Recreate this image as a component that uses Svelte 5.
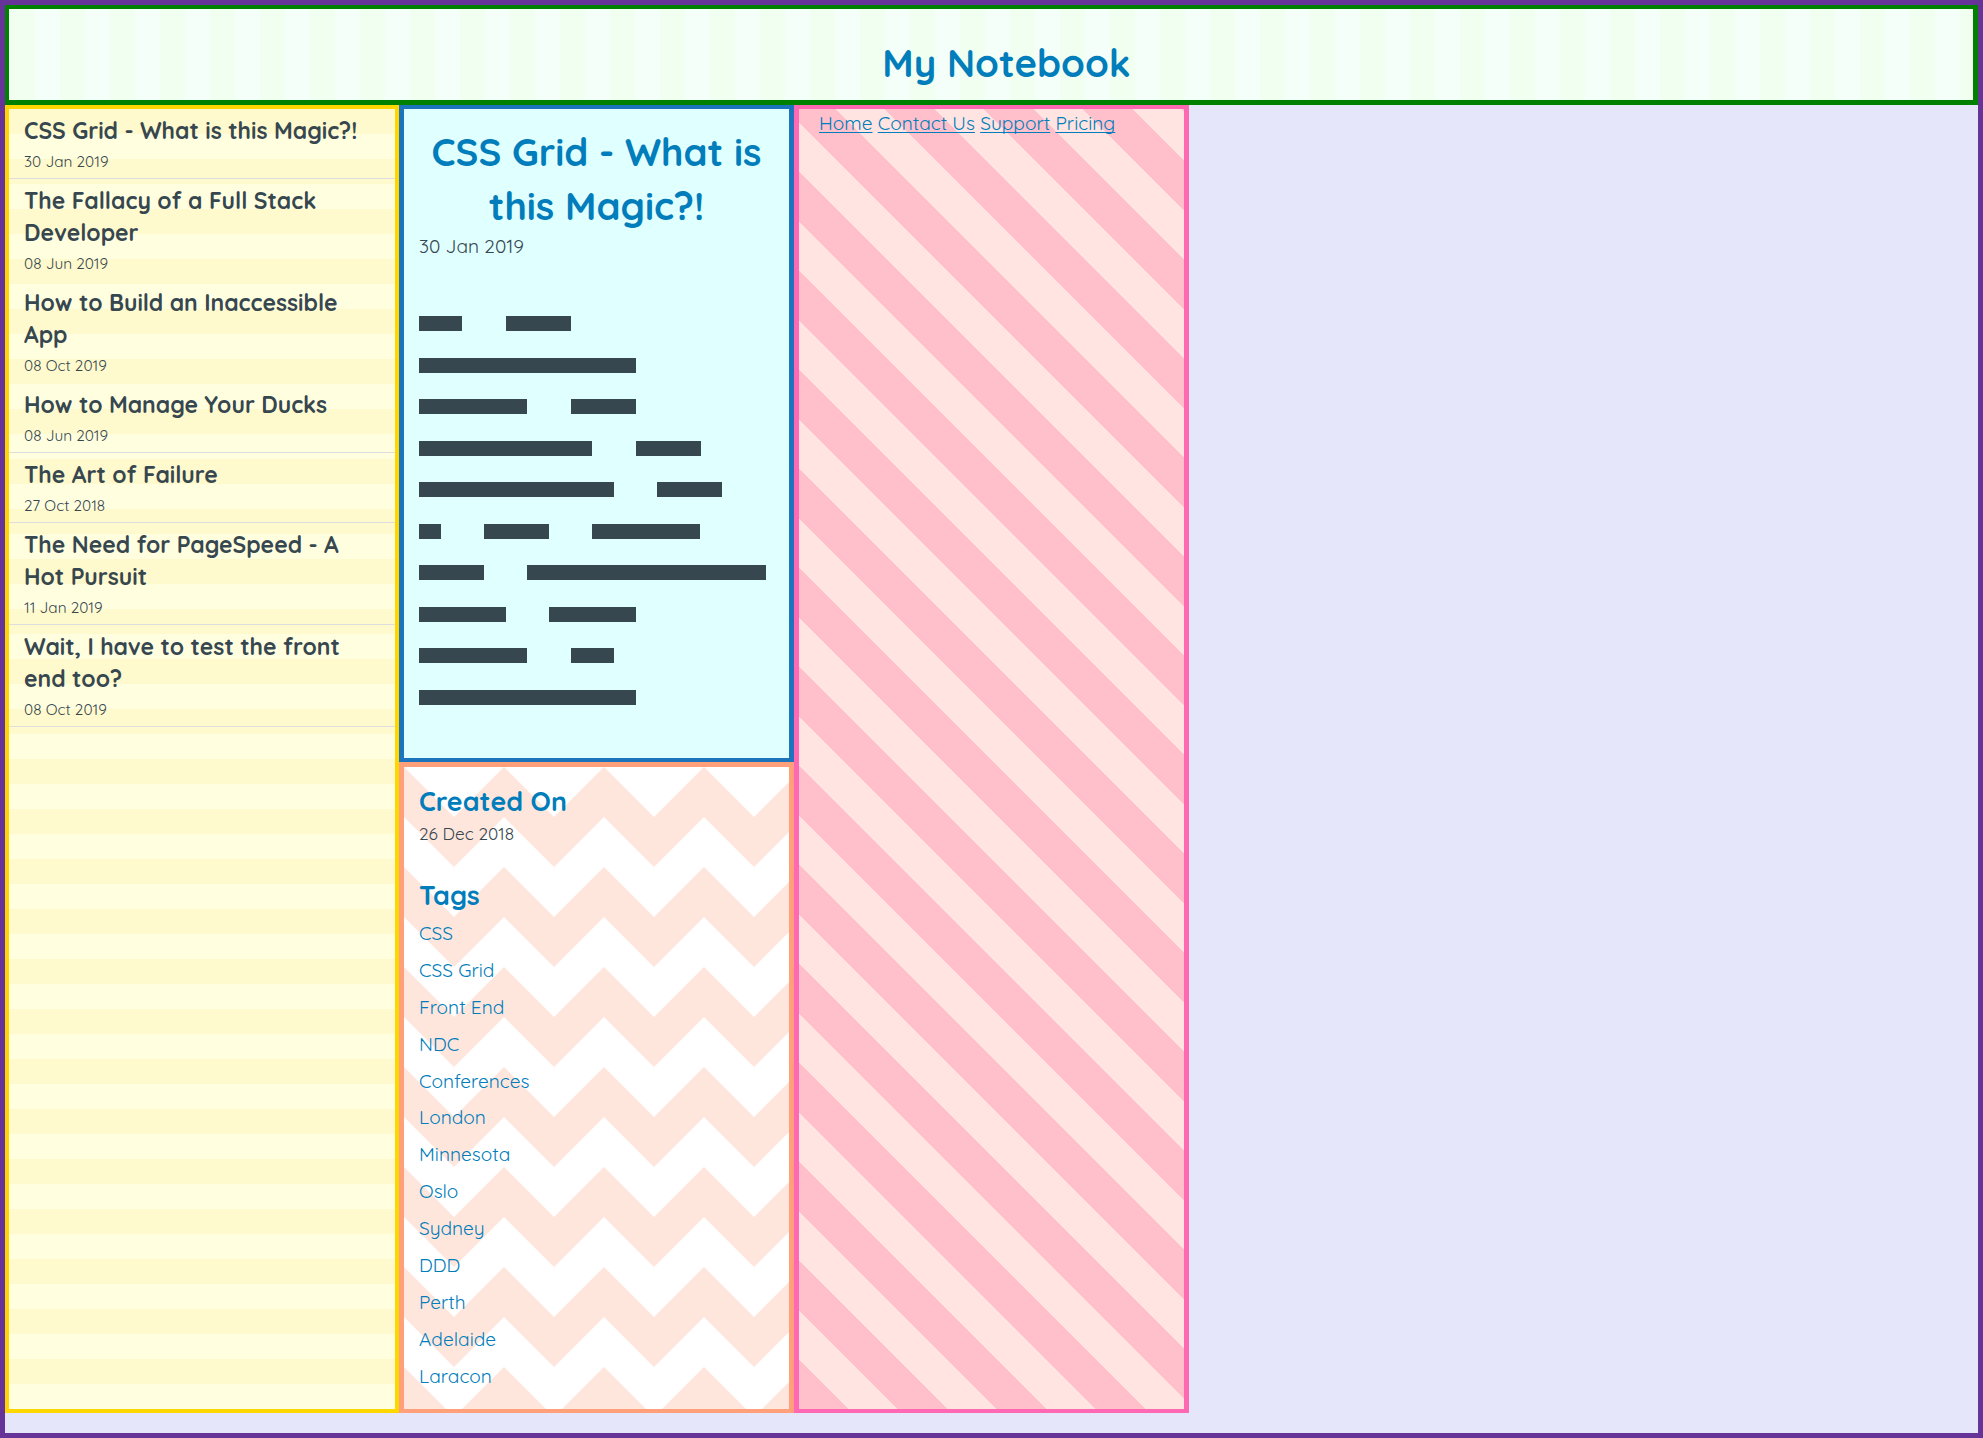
<script>
  const notes = [
    { title: 'CSS Grid - What is this Magic?!', date: '30 Jan 2019', ruled: true },
    { title: 'The Fallacy of a Full Stack Developer', date: '08 Jun 2019', ruled: false },
    { title: 'How to Build an Inaccessible App', date: '08 Oct 2019', ruled: false },
    { title: 'How to Manage Your Ducks', date: '08 Jun 2019', ruled: true },
    { title: 'The Art of Failure', date: '27 Oct 2018', ruled: true },
    { title: 'The Need for PageSpeed - A Hot Pursuit', date: '11 Jan 2019', ruled: true },
    { title: 'Wait, I have to test the front end too?', date: '08 Oct 2019', ruled: true }
  ];
  // Word lengths of each placeholder line, in block units.
  const lines = [[2, 3], [10], [5, 3], [8, 3], [9, 3], [1, 3, 5], [3, 11], [4, 4], [5, 2], [10]];
  const unit = 21.68;
  const tags = ['CSS', 'CSS Grid', 'Front End', 'NDC', 'Conferences', 'London', 'Minnesota', 'Oslo', 'Sydney', 'DDD', 'Perth', 'Adelaide', 'Laracon'];
  const links = ['Home', 'Contact Us', 'Support', 'Pricing'];
</script>

<div class="page">
  <header><h1>My Notebook</h1></header>

  <section class="notes">
    {#each notes as note}
      <div class="note" class:ruled={note.ruled}>
        <h3>{note.title}</h3>
        <p>{note.date}</p>
      </div>
    {/each}
  </section>

  <div class="middle">
    <article>
      <h1>CSS Grid - What is this Magic?!</h1>
      <p class="date">30 Jan 2019</p>
      <div class="lines">
        {#each lines as words}
          <div class="line">
            {#each words as w}<span style="width: {w * unit}px"></span>{/each}
          </div>
        {/each}
      </div>
    </article>
    <aside>
      <h2>Created On</h2>
      <p class="created">26 Dec 2018</p>
      <h2>Tags</h2>
      <ul>
        {#each tags as tag}<li>{tag}</li>{/each}
      </ul>
    </aside>
  </div>

  <nav>
    {#each links as link}<a href="#top">{link}</a>{' '}{/each}
  </nav>
</div>

<style>
  :global(body) { margin: 0; }
  .page {
    box-sizing: border-box;
    width: 1983px;
    height: 1438px;
    border: 5px solid #663399;
    background: #e6e6fa;
    color: #37474f;
    font-family: Quicksand, Lato, sans-serif;
    font-size: 19.1px;
    display: grid;
    grid-template-columns: 394px 395px 395px 1fr;
    grid-template-rows: 100px 1308px;
  }
  h1, h2, h3, p, ul { margin: 0; padding: 0; }
  header, section, article, aside, nav { box-sizing: border-box; }
  h1, h2 { color: #007dba; font-weight: 700; }
  h1 {
    font-size: 38.3px;
    line-height: 54px;
    text-align: center;
  }
  header {
    grid-column: 1 / -1;
    border: solid green;
    border-width: 4px 5px 5px 4px;
    padding: 27px 0 0 31px;
    background: repeating-linear-gradient(90deg, #f0fff0 0.7px 25.7px, #f5fffa 25.7px 50.7px);
  }
  .notes {
    border: 4px solid #ffd700;
    background: repeating-linear-gradient(0deg, #ffffe0 0 25px, #fffacd 25px 50px);
  }
  .note {
    padding: 6px 15px 4px;
    border-bottom: 1px solid transparent;
  }
  .note.ruled { border-bottom-color: #ddd; }
  h3 {
    font-size: 22.96px;
    line-height: 32px;
    font-weight: 700;
  }
  .note p {
    margin-top: 3px;
    font-size: 15.36px;
    line-height: 24px;
  }
  .middle {
    display: grid;
    grid-template-rows: 657px 651px;
  }
  article {
    border: solid #1c75bc;
    border-width: 4px 5px;
    background: #e0ffff;
    padding: 16px 15px 0;
  }
  .date { line-height: 26px; }
  .lines {
    display: flex;
    flex-direction: column;
    gap: 26.56px;
    margin-top: 57px;
  }
  .line {
    display: flex;
    gap: 43.2px;
    height: 15px;
  }
  .line span { background: #37474f; }
  aside {
    border: solid #ffa07a;
    border-width: 5px 5px 4px;
    padding: 17px 15px 0;
    background: #fff url("data:image/svg+xml,%3Csvg xmlns='http://www.w3.org/2000/svg' width='100' height='100'%3E%3Cpath fill='%23ffe6dd' d='M0 0L50 50L100 0V50L50 100L0 50Z'/%3E%3C/svg%3E");
  }
  h2 {
    font-size: 26.8px;
    line-height: 34px;
  }
  .created {
    font-size: 17.28px;
    line-height: 26px;
    margin: 3px 0 31px;
  }
  ul { list-style: none; padding-top: 3px; }
  li {
    color: #007dba;
    line-height: 36.88px;
  }
  nav {
    border: solid #ff69b4;
    border-width: 4px 5px;
    padding: 2px 20px;
    line-height: 24px;
    background: repeating-linear-gradient(45deg, #ffc0cb 0 35px, #ffe4e1 35px 70px);
  }
  a { color: #007dba; text-decoration-thickness: 1px; text-underline-offset: 2px; text-decoration-skip-ink: none; }
</style>
